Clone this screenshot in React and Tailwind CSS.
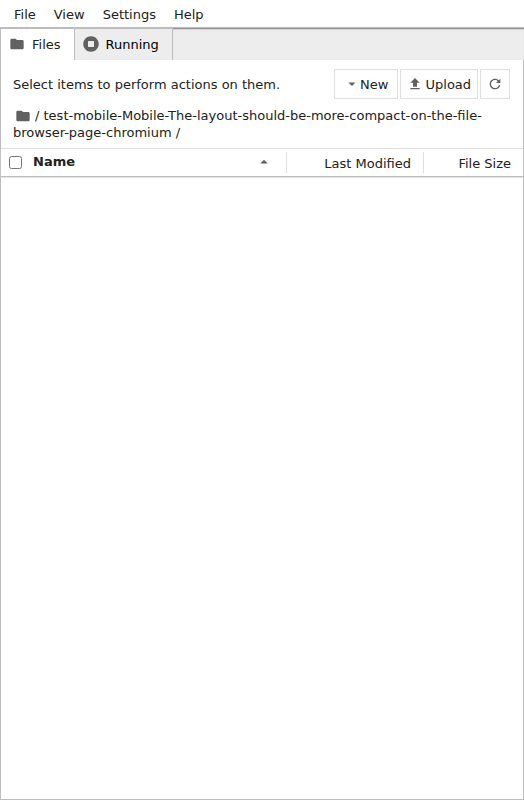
const FOLDER = 'M10 4H4c-1.1 0-1.99.9-1.99 2L2 18c0 1.1.9 2 2 2h16c1.1 0 2-.9 2-2V8c0-1.1-.9-2-2-2h-8l-2-2z';
const RUNNING =
  'M256 8C119 8 8 119 8 256s111 248 248 248 248-111 248-248S393 8 256 8zm96 328c0 8.8-7.2 16-16 16H176c-8.8 0-16-7.2-16-16V176c0-8.8 7.2-16 16-16h160c8.8 0 16 7.2 16 16v160z';
const UPLOAD = 'M9 16h6v-6h4l-7-7-7 7h4v6zm-4 2h14v2H5v-2z';
const REFRESH =
  'M9 13.5c-2.49 0-4.5-2.01-4.5-4.5S6.51 4.5 9 4.5c1.24 0 2.36.52 3.17 1.33L10 8h5V3l-1.76 1.76C12.15 3.68 10.66 3 9 3 5.69 3 3.01 5.69 3.01 9S5.69 15 9 15c2.97 0 5.43-2.16 5.9-5h-1.52c-.46 2-2.24 3.5-4.38 3.5z';

function Icon({ d, size = 24, className = 'size-4' }) {
  return (
    <svg viewBox={`0 0 ${size} ${size}`} className={`shrink-0 fill-[#616161] ${className}`}>
      <path d={d} />
    </svg>
  );
}

function MenuBar() {
  return (
    <nav className="flex h-[27px] shrink-0 items-center gap-[18px] pl-[14px] pt-[2px]">
      <span>File</span>
      <span>View</span>
      <span>Settings</span>
      <span>Help</span>
    </nav>
  );
}

function TabBar() {
  return (
    <div className="flex h-[33px] shrink-0 border-t border-[#bdbdbd] bg-[#ededed]">
      <div className="flex w-[75px] items-center border-x border-t border-[#bdbdbd] bg-white pl-2">
        <Icon d={FOLDER} className="-mt-px size-4" />
        <span className="ml-[7px]">Files</span>
      </div>
      <div className="flex w-[98px] items-center border-r border-t border-[#bdbdbd] pl-2 text-black">
        <Icon d={RUNNING} size={512} className="-mt-px size-4" />
        <span className="ml-[6.5px]">Running</span>
      </div>
      <div className="flex-1 border-t border-[#949494] shadow-[inset_0_1px_1px_#d4d4d4]" />
    </div>
  );
}

function Toolbar() {
  return (
    <div className="flex h-12 shrink-0 items-center pl-3 pr-[13px]">
      <span className="flex-1">Select items to perform actions on them.</span>
      <button className="flex h-[30px] w-16 items-center border border-[#e0e0e0] pl-[9px]">
        <Icon d="M5.2,7.5L9,11.2l3.8-3.8H5.2z" size={18} />
        New
      </button>
      <button className="ml-0.5 flex h-[30px] w-[78px] items-center border border-[#e0e0e0] pl-[6px]">
        <Icon d={UPLOAD} />
        <span className="ml-[2.5px]">Upload</span>
      </button>
      <button className="ml-0.5 flex h-[30px] w-[30px] items-center justify-center border border-[#e0e0e0]">
        <Icon d={REFRESH} size={18} />
      </button>
    </div>
  );
}

function Breadcrumbs() {
  return (
    <div className="h-10 shrink-0 px-3 leading-[17px] -mt-px">
      <Icon d={FOLDER} className="ml-0.5 mr-1 inline-block size-4 align-[-4px]" />
      / test-mobile-Mobile-The-layout-should-be-more-compact-on-the-file-browser-page-chromium /
    </div>
  );
}

function ListHeader() {
  return (
    <div className="mt-px flex h-[29px] shrink-0 border-b border-t border-b-[#bdbdbd] border-t-[#e0e0e0] shadow-[0_1px_1px_#e6e6e6]">
      <div className="flex w-[285px] items-center pl-2 pr-[13px]">
        <span className="size-[13px] rounded-[2.5px] border border-[#767676] bg-white" />
        <span className="ml-[11px] flex-1 pb-[2px] font-bold">Name</span>
        <Icon d="M5.2,10.5L9,6.8l3.8,3.8H5.2z" size={18} className="-mt-px size-[18px]" />
      </div>
      <div className="my-[3px] flex w-[137px] items-center justify-end border-l border-[#e0e0e0] pr-3 pt-0.5">
        Last Modified
      </div>
      <div className="my-[3px] flex flex-1 items-center justify-end border-l border-[#e0e0e0] pr-3 pt-0.5">
        File Size
      </div>
    </div>
  );
}

export default function App() {
  return (
    <div className="flex h-[800px] w-[524px] flex-col bg-white font-['DejaVu_Sans',sans-serif] text-[13px] leading-[17px] text-[#212121]">
      <MenuBar />
      <TabBar />
      <main className="flex flex-1 flex-col border-x border-b border-[#bdbdbd]">
        <Toolbar />
        <Breadcrumbs />
        <ListHeader />
      </main>
    </div>
  );
}
